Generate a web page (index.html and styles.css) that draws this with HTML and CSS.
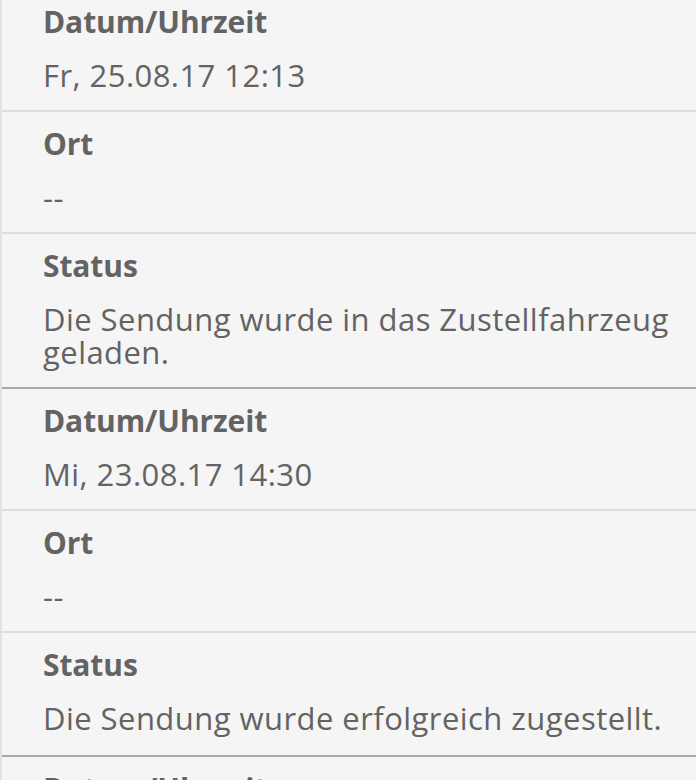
FILE: index.html
```html
<!DOCTYPE html>
<html lang="de">
<head>
<meta charset="utf-8">
<title>Sendungsverlauf</title>
<link rel="stylesheet" href="styles.css">
</head>
<body>
<div class="list">
  <div class="group">
    <div class="row"><div class="label">Datum/Uhrzeit</div><div class="value">Fr, 25.08.17 12:13</div></div>
    <div class="row"><div class="label">Ort</div><div class="value">--</div></div>
    <div class="row"><div class="label">Status</div><div class="value">Die Sendung wurde in das Zustellfahrzeug geladen.</div></div>
  </div>
  <div class="group">
    <div class="row"><div class="label">Datum/Uhrzeit</div><div class="value">Mi, 23.08.17 14:30</div></div>
    <div class="row"><div class="label">Ort</div><div class="value">--</div></div>
    <div class="row"><div class="label">Status</div><div class="value">Die Sendung wurde erfolgreich zugestellt.</div></div>
  </div>
  <div class="group">
    <div class="row"><div class="label">Datum/Uhrzeit</div><div class="value">Di, 22.08.17 18:02</div></div>
  </div>
</div>
</body>
</html>
```

FILE: styles.css
```css
html, body {
  margin: 0;
  padding: 0;
  background: #f5f5f5;
  height: 100%;
  overflow: hidden;
}
body {
  font-family: "Open Sans", "Noto Sans", sans-serif;
  color: #636363;
}
.list {
  margin-top: -10px;
  border-left: 2px solid #e2e2e2;
  min-height: 800px;
}
.group {
  border-bottom: 2px solid #a9a9a9;
}
.row {
  padding: 15px 14px 18px 41px;
  border-bottom: 2px solid #dedede;
  display: flex;
  flex-direction: column;
  gap: 21px;
}
.group:nth-child(2) .row:last-child {
  padding-bottom: 20px;
}
.group .row:last-child {
  border-bottom: none;
}
.label {
  font-size: 30px;
  line-height: 33px;
  font-weight: 700;
  letter-spacing: -0.1px;
}
.value {
  font-size: 31px;
  line-height: 33px;
  font-weight: 400;
  letter-spacing: 0.45px;
}
```
